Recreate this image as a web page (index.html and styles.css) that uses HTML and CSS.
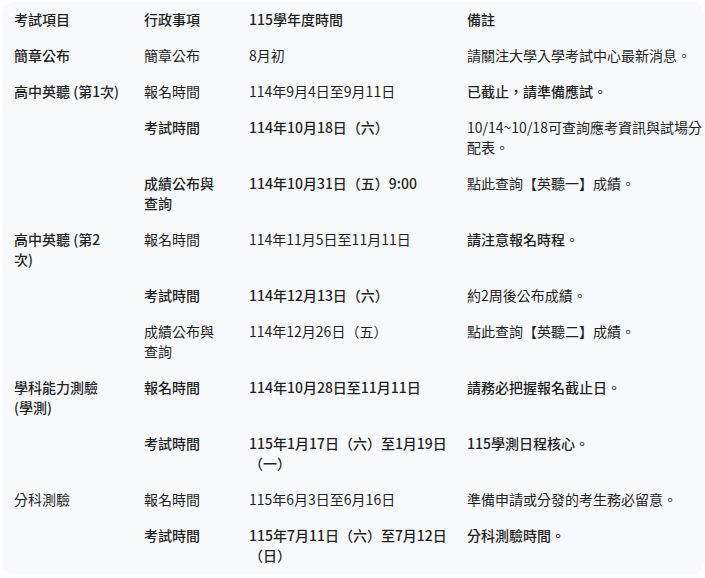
FILE: index.html
```html
<!DOCTYPE html>
<html lang="zh-Hant">
<head>
<meta charset="utf-8">
<title>115學年度考試時程</title>
<link rel="stylesheet" href="styles.css">
</head>
<body>
<div class="card">
  <table class="schedule">
    <colgroup>
      <col class="c1"><col class="c2"><col class="c3"><col class="c4">
    </colgroup>
    <thead>
      <tr><th>考試項目</th><th>行政事項</th><th>115學年度時間</th><th>備註</th></tr>
    </thead>
    <tbody>
      <tr><td class="b">簡章公布</td><td>簡章公布</td><td>8月初</td><td>請關注大學入學考試中心最新消息。</td></tr>
      <tr><td class="b">高中英聽 (第1次)</td><td>報名時間</td><td>114年9月4日至9月11日</td><td class="b">已截止，請準備應試。</td></tr>
      <tr><td></td><td class="b">考試時間</td><td class="b">114年10月18日（六）</td><td>10/14~10/18可查詢應考資訊與試場分配表。</td></tr>
      <tr><td></td><td class="b">成績公布與查詢</td><td class="b">114年10月31日（五）9:00</td><td>點此查詢【英聽一】成績。</td></tr>
      <tr><td class="b">高中英聽 (第2<br>次)</td><td>報名時間</td><td>114年11月5日至11月11日</td><td class="b">請注意報名時程。</td></tr>
      <tr><td></td><td class="b">考試時間</td><td class="b">114年12月13日（六）</td><td>約2周後公布成績。</td></tr>
      <tr><td></td><td>成績公布與查詢</td><td>114年12月26日（五）</td><td>點此查詢【英聽二】成績。</td></tr>
      <tr><td class="b">學科能力測驗<br>(學測)</td><td class="b">報名時間</td><td class="b">114年10月28日至11月11日</td><td class="b">請務必把握報名截止日。</td></tr>
      <tr><td></td><td class="b">考試時間</td><td class="b">115年1月17日（六）至1月19日（一）</td><td class="b">115學測日程核心。</td></tr>
      <tr><td>分科測驗</td><td>報名時間</td><td>115年6月3日至6月16日</td><td>準備申請或分發的考生務必留意。</td></tr>
      <tr><td></td><td class="b">考試時間</td><td class="b">115年7月11日（六）至7月12日（日）</td><td class="b">分科測驗時間。</td></tr>
    </tbody>
  </table>
</div>
</body>
</html>
```
FILE: styles.css
```css
html, body {
  margin: 0;
  padding: 0;
  background: #ffffff;
}
body {
  font-family: "Noto Sans CJK TC", "Noto Sans", sans-serif;
  font-size: 14px;
  line-height: 20px;
  color: #1f1f1f;
  font-variant-numeric: proportional-nums;
}
.card {
  margin: 2px 1px 0 2px;
  background: #f8f9fd;
  border-radius: 12px;
  overflow: hidden;
}
.schedule {
  width: 100%;
  border-collapse: collapse;
  table-layout: fixed;
}
.c1 { width: 130px; }
.c2 { width: 105px; }
.c3 { width: 218px; }
.schedule th,
.schedule td {
  padding: 7px 12px 9px 12px;
  text-align: left;
  vertical-align: top;
  font-weight: 400;
}
.schedule th:nth-child(3),
.schedule td:nth-child(3) {
  padding-right: 6px;
}
.schedule th:nth-child(4),
.schedule td:nth-child(4) {
  padding-right: 0;
}
.schedule th,
.schedule td.b {
  font-weight: 500;
}
```
